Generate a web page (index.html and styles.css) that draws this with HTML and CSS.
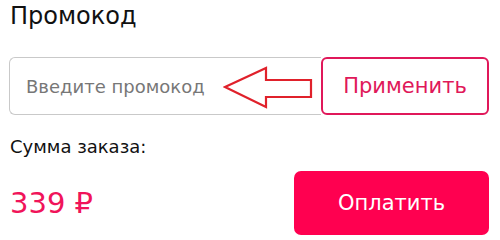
FILE: index.html
```html
<!DOCTYPE html>
<html lang="ru">
<head>
<meta charset="utf-8">
<link rel="stylesheet" href="styles.css">
</head>
<body>
<div class="checkout">
  <h2 class="title">Промокод</h2>
  <div class="promo-row">
    <div class="promo-input">
      <input class="field" type="text" placeholder="Введите промокод">
      <svg class="arrow" width="92" height="46" viewBox="0 0 92 46">
        <polygon points="2,21 43,2 43,14 88,14 88,31 43,31 43,41" fill="none" stroke="#e0212b" stroke-width="2.2" stroke-linejoin="miter"/>
      </svg>
    </div>
    <button class="apply">Применить</button>
  </div>
  <div class="sum-label">Сумма заказа:</div>
  <div class="pay-row">
    <div class="price">339 ₽</div>
    <button class="pay">Оплатить</button>
  </div>
</div>
</body>
</html>
```
FILE: styles.css
```css
html, body {
  margin: 0;
  padding: 0;
  background: #fff;
}
.checkout {
  width: 480px;
  padding: 0 11px 0 9px;
  font-family: "DejaVu Sans", sans-serif;
  color: #111;
}
.title {
  margin: 0;
  padding: 0 0 0 1px;
  font-size: 24px;
  font-weight: 400;
  line-height: 32px;
}
.promo-row {
  display: flex;
  margin-top: 25px;
  height: 58px;
}
.promo-input {
  position: relative;
  flex: 1;
  display: flex;
}
.field {
  flex: 1;
  box-sizing: border-box;
  border: 1.5px solid #c9c9c9;
  border-right: none;
  border-radius: 6px 0 0 6px;
  padding: 0 0 0 16px;
  font-family: "DejaVu Sans", sans-serif;
  font-size: 18px;
  color: #111;
  outline: none;
}
.field::placeholder {
  color: #777;
}
.arrow {
  position: absolute;
  left: 214px;
  top: 9px;
}
.apply {
  width: 168px;
  box-sizing: border-box;
  border: 2px solid #e0185a;
  border-radius: 6px;
  background: #fff;
  color: #e0185a;
  font-family: "DejaVu Sans", sans-serif;
  font-size: 21px;
  cursor: pointer;
}
.sum-label {
  margin-top: 20px;
  padding-left: 1px;
  font-size: 18px;
  line-height: 24px;
}
.pay-row {
  display: flex;
  justify-content: space-between;
  align-items: center;
  margin-top: 12px;
}
.price {
  padding-left: 1px;
  color: #f0145a;
  font-size: 29px;
}
.pay {
  width: 195px;
  height: 64px;
  border: none;
  border-radius: 7px;
  background: #ff0050;
  color: #fff;
  font-family: "DejaVu Sans", sans-serif;
  font-size: 21px;
  cursor: pointer;
}
```
